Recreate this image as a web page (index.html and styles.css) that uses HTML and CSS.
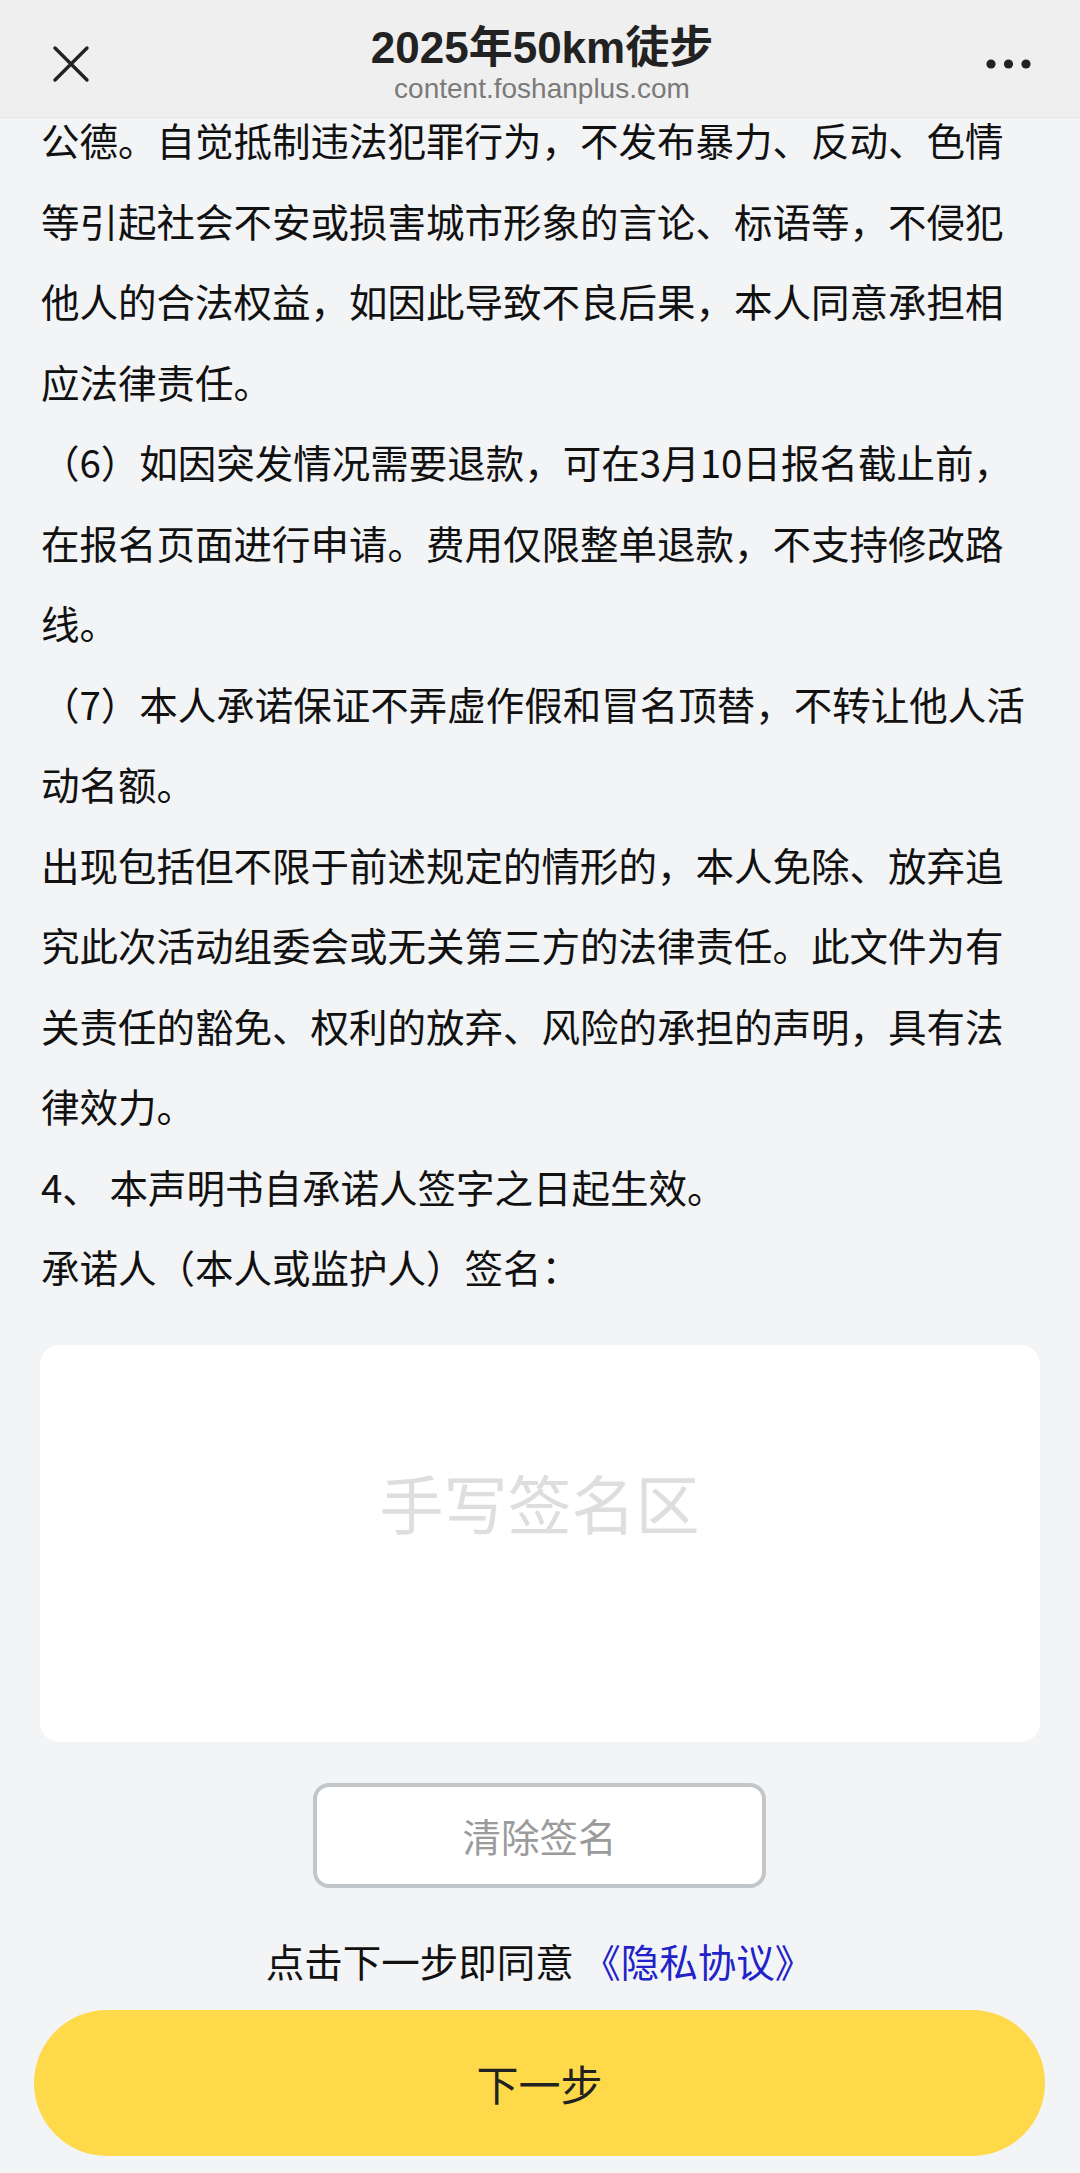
FILE: index.html
```html
<!DOCTYPE html>
<html lang="zh-CN">
<head>
  <meta charset="UTF-8" />
  <meta name="viewport" content="width=device-width, initial-scale=1.0"/>
  <title>2025年50km徒步</title>
  <link rel="stylesheet" href="styles.css">
</head>
<body>
  <div class="topbar">
    <button class="bar-btn close-btn" aria-label="关闭">
      <svg width="38" height="38" viewBox="0 0 38 38">
        <path d="M3 3 L35 35 M35 3 L3 35" stroke="#222" stroke-width="3.4" stroke-linecap="round" fill="none"/>
      </svg>
    </button>
    <div class="bar-title">
      <div class="title">2025年50km徒步</div>
      <div class="url">content.foshanplus.com</div>
    </div>
    <button class="bar-btn more-btn" aria-label="更多">
      <svg width="46" height="10" viewBox="0 0 46 10">
        <circle cx="5" cy="5" r="4.6" fill="#222"/>
        <circle cx="22.5" cy="5" r="4.6" fill="#222"/>
        <circle cx="40" cy="5" r="4.6" fill="#222"/>
      </svg>
    </button>
  </div>

  <div class="content">
    <p>公德。自觉抵制违法犯罪行为，不发布暴力、反动、色情等引起社会不安或损害城市形象的言论、标语等，不侵犯他人的合法权益，如因此导致不良后果，本人同意承担相应法律责任。</p>
    <p>（6）如因突发情况需要退款，可在3月10日报名截止前，在报名页面进行申请。费用仅限整单退款，不支持修改路线。</p>
    <p>（7）本人承诺保证不弄虚作假和冒名顶替，不转让他人活动名额。</p>
    <p>出现包括但不限于前述规定的情形的，本人免除、放弃追究此次活动组委会或无关第三方的法律责任。此文件为有关责任的豁免、权利的放弃、风险的承担的声明，具有法律效力。</p>
    <p>4、 本声明书自承诺人签字之日起生效。</p>
    <p>承诺人（本人或监护人）签名：</p>
  </div>

  <div class="sign-section">
    <div class="sign-pad">手写签名区</div>
    <button class="clear-btn">清除签名</button>
    <div class="agree">点击下一步即同意 <a href="#" class="agree-link">《隐私协议》</a></div>
    <button class="next-btn">下一步</button>
  </div>
</body>
</html>
```

FILE: styles.css
```css
body {
  margin: 0;
  background: #f3f4f6;
  color: #111;
  font-family: "Noto Sans CJK SC", "Noto Sans", sans-serif;
}

/* browser bar sits over the scrolled page */
.topbar {
  position: fixed;
  top: 0;
  left: 0;
  right: 0;
  height: 118px;
  box-sizing: border-box;
  padding: 10px 48px 0 52px;
  display: grid;
  grid-template-columns: 1fr auto 1fr;
  align-items: center;
  background: #efefef;
  border-bottom: 1px solid #e5e5e5;
  z-index: 10;
}
.bar-btn {
  background: none;
  border: none;
  padding: 0;
  display: flex;
}
.more-btn {
  justify-self: end;
}
.bar-title {
  text-align: center;
  font-family: "Liberation Sans", "Noto Sans CJK SC", sans-serif;
}
.title {
  font-size: 44px;
  line-height: 48px;
  font-weight: 700;
  color: #222;
}
.url {
  margin-top: 2px;
  font-size: 28px;
  line-height: 30px;
  color: #7a7a7a;
}

.content {
  padding: 99px 49px 0 41px;
  font-size: 38.5px;
  line-height: 80.5px;
}
.content p {
  margin: 0;
}

.sign-section {
  display: flex;
  flex-direction: column;
  align-items: center;
  padding: 0 35px 15px 34px;
}
.sign-pad {
  width: 1000px;
  height: 397px;
  box-sizing: border-box;
  margin-top: 38px;
  padding-top: 116px;
  background: #fff;
  border-radius: 20px;
  text-align: center;
  font-size: 64px;
  line-height: 80px;
  color: #dedede;
}
.clear-btn {
  width: 453px;
  height: 105px;
  margin-top: 41px;
  background: #fff;
  border: 4px solid #c3c6c9;
  border-radius: 16px;
  font-family: inherit;
  font-size: 38.5px;
  color: #9b9b9b;
}
.agree {
  margin-top: 32px;
  font-size: 38.5px;
  line-height: 80px;
  color: #111;
}
.agree-link {
  color: #2222c8;
  text-decoration: none;
}
.next-btn {
  width: 100%;
  height: 146px;
  margin-top: 10px;
  background: #fed94a;
  border: none;
  border-radius: 73px;
  font-family: inherit;
  font-size: 42px;
  color: #222;
}
```
